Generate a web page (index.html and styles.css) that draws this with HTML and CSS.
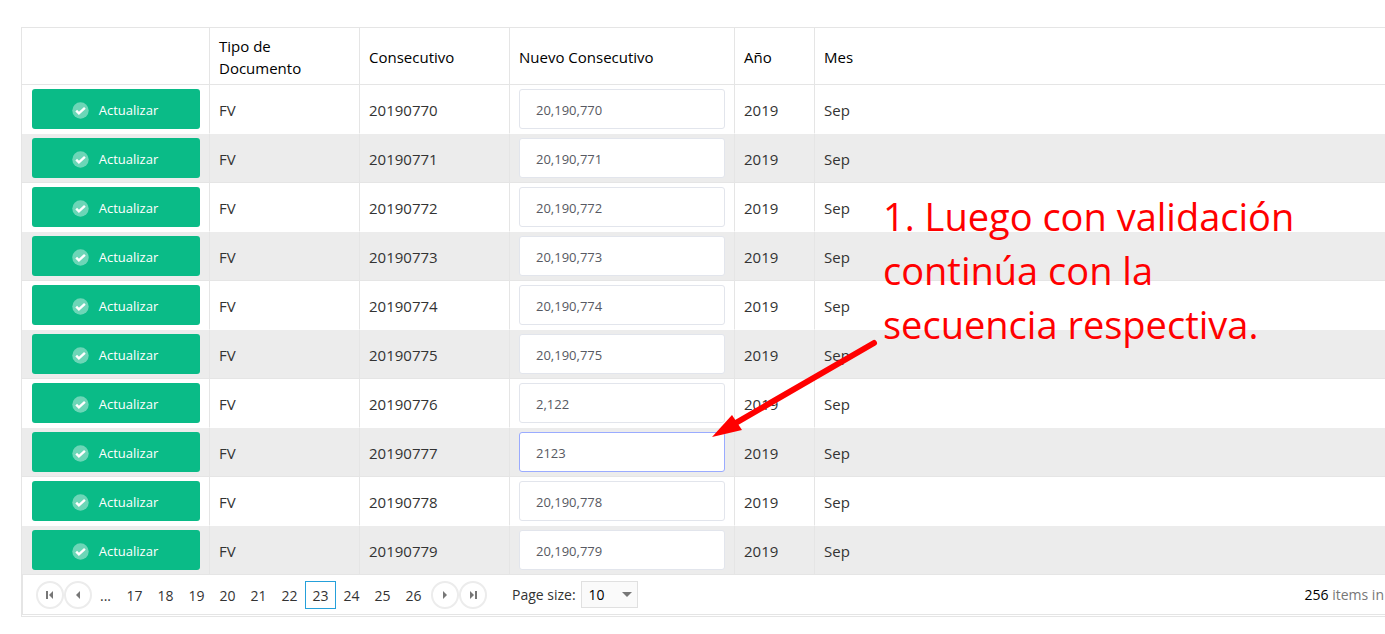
FILE: index.html
```html
<!DOCTYPE html>
<html lang="es">
<head>
    <meta charset="UTF-8">
    <meta name="viewport" content="width=device-width, initial-scale=1.0">
    <title>Actualizar Consecutivos</title>
    <link rel="stylesheet" href="styles.css">
</head>
<body>
    <svg class="symbols" aria-hidden="true">
        <symbol id="check" viewBox="0 0 17 17">
            <circle cx="8.5" cy="8.5" r="8.2" fill="#fff" fill-opacity="0.4"/>
            <path d="M4.2 8.6l2.7 2.8 6-5.6" fill="none" stroke="#fff" stroke-width="2.4"/>
        </symbol>
    </svg>

    <div class="grid">
        <table class="grid-table">
            <colgroup>
                <col class="col-action">
                <col class="col-type">
                <col class="col-number">
                <col class="col-new">
                <col class="col-year">
                <col>
            </colgroup>
            <thead>
                <tr>
                    <th></th>
                    <th>Tipo de Documento</th>
                    <th>Consecutivo</th>
                    <th>Nuevo Consecutivo</th>
                    <th>Año</th>
                    <th>Mes</th>
                </tr>
            </thead>
            <tbody>
                <tr>
                    <td class="control"><button class="btn-update" type="button"><svg><use href="#check"/></svg>Actualizar</button></td>
                    <td>FV</td>
                    <td>20190770</td>
                    <td class="control"><input class="new-number" type="text" aria-label="Nuevo Consecutivo" value="20,190,770"></td>
                    <td>2019</td>
                    <td>Sep</td>
                </tr>
                <tr>
                    <td class="control"><button class="btn-update" type="button"><svg><use href="#check"/></svg>Actualizar</button></td>
                    <td>FV</td>
                    <td>20190771</td>
                    <td class="control"><input class="new-number" type="text" aria-label="Nuevo Consecutivo" value="20,190,771"></td>
                    <td>2019</td>
                    <td>Sep</td>
                </tr>
                <tr>
                    <td class="control"><button class="btn-update" type="button"><svg><use href="#check"/></svg>Actualizar</button></td>
                    <td>FV</td>
                    <td>20190772</td>
                    <td class="control"><input class="new-number" type="text" aria-label="Nuevo Consecutivo" value="20,190,772"></td>
                    <td>2019</td>
                    <td>Sep</td>
                </tr>
                <tr>
                    <td class="control"><button class="btn-update" type="button"><svg><use href="#check"/></svg>Actualizar</button></td>
                    <td>FV</td>
                    <td>20190773</td>
                    <td class="control"><input class="new-number" type="text" aria-label="Nuevo Consecutivo" value="20,190,773"></td>
                    <td>2019</td>
                    <td>Sep</td>
                </tr>
                <tr>
                    <td class="control"><button class="btn-update" type="button"><svg><use href="#check"/></svg>Actualizar</button></td>
                    <td>FV</td>
                    <td>20190774</td>
                    <td class="control"><input class="new-number" type="text" aria-label="Nuevo Consecutivo" value="20,190,774"></td>
                    <td>2019</td>
                    <td>Sep</td>
                </tr>
                <tr>
                    <td class="control"><button class="btn-update" type="button"><svg><use href="#check"/></svg>Actualizar</button></td>
                    <td>FV</td>
                    <td>20190775</td>
                    <td class="control"><input class="new-number" type="text" aria-label="Nuevo Consecutivo" value="20,190,775"></td>
                    <td>2019</td>
                    <td>Sep</td>
                </tr>
                <tr>
                    <td class="control"><button class="btn-update" type="button"><svg><use href="#check"/></svg>Actualizar</button></td>
                    <td>FV</td>
                    <td>20190776</td>
                    <td class="control"><input class="new-number" type="text" aria-label="Nuevo Consecutivo" value="2,122"></td>
                    <td>2019</td>
                    <td>Sep</td>
                </tr>
                <tr>
                    <td class="control"><button class="btn-update" type="button"><svg><use href="#check"/></svg>Actualizar</button></td>
                    <td>FV</td>
                    <td>20190777</td>
                    <td class="control"><input class="new-number active" type="text" aria-label="Nuevo Consecutivo" value="2123"></td>
                    <td>2019</td>
                    <td>Sep</td>
                </tr>
                <tr>
                    <td class="control"><button class="btn-update" type="button"><svg><use href="#check"/></svg>Actualizar</button></td>
                    <td>FV</td>
                    <td>20190778</td>
                    <td class="control"><input class="new-number" type="text" aria-label="Nuevo Consecutivo" value="20,190,778"></td>
                    <td>2019</td>
                    <td>Sep</td>
                </tr>
                <tr>
                    <td class="control"><button class="btn-update" type="button"><svg><use href="#check"/></svg>Actualizar</button></td>
                    <td>FV</td>
                    <td>20190779</td>
                    <td class="control"><input class="new-number" type="text" aria-label="Nuevo Consecutivo" value="20,190,779"></td>
                    <td>2019</td>
                    <td>Sep</td>
                </tr>
            </tbody>
        </table>

        <div class="pager">
            <button class="pager-btn" type="button" aria-label="First page">
                <svg viewBox="0 0 8 8"><path d="M0 0h2v8H0zM7 0v8L3 4z"/></svg>
            </button>
            <button class="pager-btn" type="button" aria-label="Previous page">
                <svg viewBox="0 0 8 8"><path d="M6 0v8L2 4z"/></svg>
            </button>
            <nav class="pages">
                <a class="more" href="#">...</a>
                <a href="#">17</a>
                <a href="#">18</a>
                <a href="#">19</a>
                <a href="#">20</a>
                <a href="#">21</a>
                <a href="#">22</a>
                <a class="current" href="#">23</a>
                <a href="#">24</a>
                <a href="#">25</a>
                <a href="#">26</a>
            </nav>
            <button class="pager-btn" type="button" aria-label="Next page">
                <svg viewBox="0 0 8 8"><path d="M2 0v8l4-4z"/></svg>
            </button>
            <button class="pager-btn" type="button" aria-label="Last page">
                <svg viewBox="0 0 8 8"><path d="M6 0h2v8H6zM1 0v8l4-4z"/></svg>
            </button>
            <label class="size-label" for="pageSize">Page size:</label>
            <div class="size-box">
                <select id="pageSize">
                    <option>10</option>
                    <option>20</option>
                    <option>50</option>
                </select>
            </div>
            <div class="pager-info"><strong>256</strong> items in</div>
        </div>
    </div>

    <!-- Note on top of the grid -->
    <p class="note">1. Luego con validación<br>continúa con la<br>secuencia respectiva.</p>
    <svg class="arrow" viewBox="0 0 170 100" aria-hidden="true">
        <path d="M164 5L24 86" stroke="#f00" stroke-width="6" stroke-linecap="round"/>
        <path d="M2 99L22 77l10 15z" fill="#f00"/>
    </svg>
</body>
</html>
```

FILE: styles.css
```css
* {
    box-sizing: border-box;
}
body {
    margin: 0;
    padding: 27px 0 0 21px;
    background-color: #fff;
    font-family: "Open Sans", "Segoe UI", sans-serif;
    font-size: 15px;
    color: #333;
}
button, input, select {
    font-family: inherit;
}
.symbols {
    display: none;
}
.grid {
    border: 1px solid #e5e5e5;
    border-right: none;
    padding-bottom: 1px;
}

/* Table */
.grid-table {
    width: 100%;
    table-layout: fixed;
    border-collapse: separate;
    border-spacing: 0;
}
.col-action {
    width: 188px;
}
.col-type, .col-number {
    width: 150px;
}
.col-new {
    width: 225px;
}
.col-year {
    width: 80px;
}
th, td {
    padding: 6px 9px 4px;
    border-right: 1px solid #e5e5e5;
    border-bottom: 1px solid #fff;
    text-align: left;
    vertical-align: middle;
}
th:last-child, td:last-child {
    border-right: none;
}
th {
    height: 57px;
    border-bottom-color: #e5e5e5;
    font-weight: normal;
    line-height: 22px;
    color: #000;
}
td {
    height: 49px;
    line-height: 22px;
}
td.control {
    padding-top: 4px;
}
td:first-child {
    padding-left: 10px;
}
tbody tr:nth-child(even) td {
    background-color: #ececec;
    border-bottom-color: #e5e5e5;
}
.btn-update {
    display: flex;
    align-items: center;
    justify-content: center;
    gap: 10px;
    width: 100%;
    height: 40px;
    padding: 2px 2px 0 0;
    border: none;
    border-radius: 3px;
    background-color: #0abb87;
    color: #fff;
    font-size: 13px;
    cursor: pointer;
}
.btn-update svg {
    width: 17px;
    height: 17px;
}
.new-number {
    display: block;
    width: 100%;
    height: 40px;
    padding: 2px 16px 0;
    border: 1px solid #e2e5ec;
    border-radius: 3px;
    background-color: #fff;
    color: #575962;
    font-size: 13px;
    outline: none;
}
.new-number.active, .new-number:focus {
    border-color: #9aabff;
}

/* Pager */
.pager {
    display: flex;
    align-items: center;
    height: 40px;
    padding-left: 13px;
    border-left: 1px solid #e5e5e5;
    border-bottom: 1px solid #e5e5e5;
    font-size: 14px;
}
.pager-btn {
    display: flex;
    align-items: center;
    justify-content: center;
    width: 28px;
    height: 28px;
    padding: 0;
    border: 2px solid #ececec;
    border-radius: 50%;
    background-color: #fff;
    cursor: pointer;
}
.pager-btn svg {
    width: 8px;
    height: 8px;
    fill: #777;
}
.pages {
    display: flex;
    margin-right: 2px;
}
.pages a {
    width: 31px;
    height: 28px;
    border: 1px solid transparent;
    line-height: 27px;
    text-align: center;
    text-decoration: none;
    color: #333;
}
.pages .more {
    width: 27px;
}
.pages .current {
    border-color: #25a0da;
}
.size-label {
    margin-left: 25px;
}
.size-box {
    position: relative;
    margin-left: 5px;
}
.size-box select {
    display: block;
    width: 57px;
    height: 27px;
    padding: 0 7px;
    border: 1px solid #e0e0e0;
    border-radius: 0;
    background-color: #fafafa;
    color: #000;
    font-size: 14px;
    appearance: none;
}
.size-box::after {
    content: "";
    position: absolute;
    top: 11px;
    right: 6px;
    border: 5px solid transparent;
    border-top-color: #777;
    border-bottom: none;
    pointer-events: none;
}
.pager-info {
    margin-left: auto;
    padding-right: 1px;
    color: #777;
}
.pager-info strong {
    font-weight: normal;
    color: #000;
}

/* Note and arrow */
.note {
    position: absolute;
    top: 189px;
    left: 883px;
    margin: 0;
    font-family: "Open Sans", sans-serif;
    font-size: 38px;
    line-height: 54px;
    white-space: nowrap;
    color: #f00;
}
.arrow {
    position: absolute;
    top: 338px;
    left: 710px;
    width: 170px;
    height: 100px;
}
```
